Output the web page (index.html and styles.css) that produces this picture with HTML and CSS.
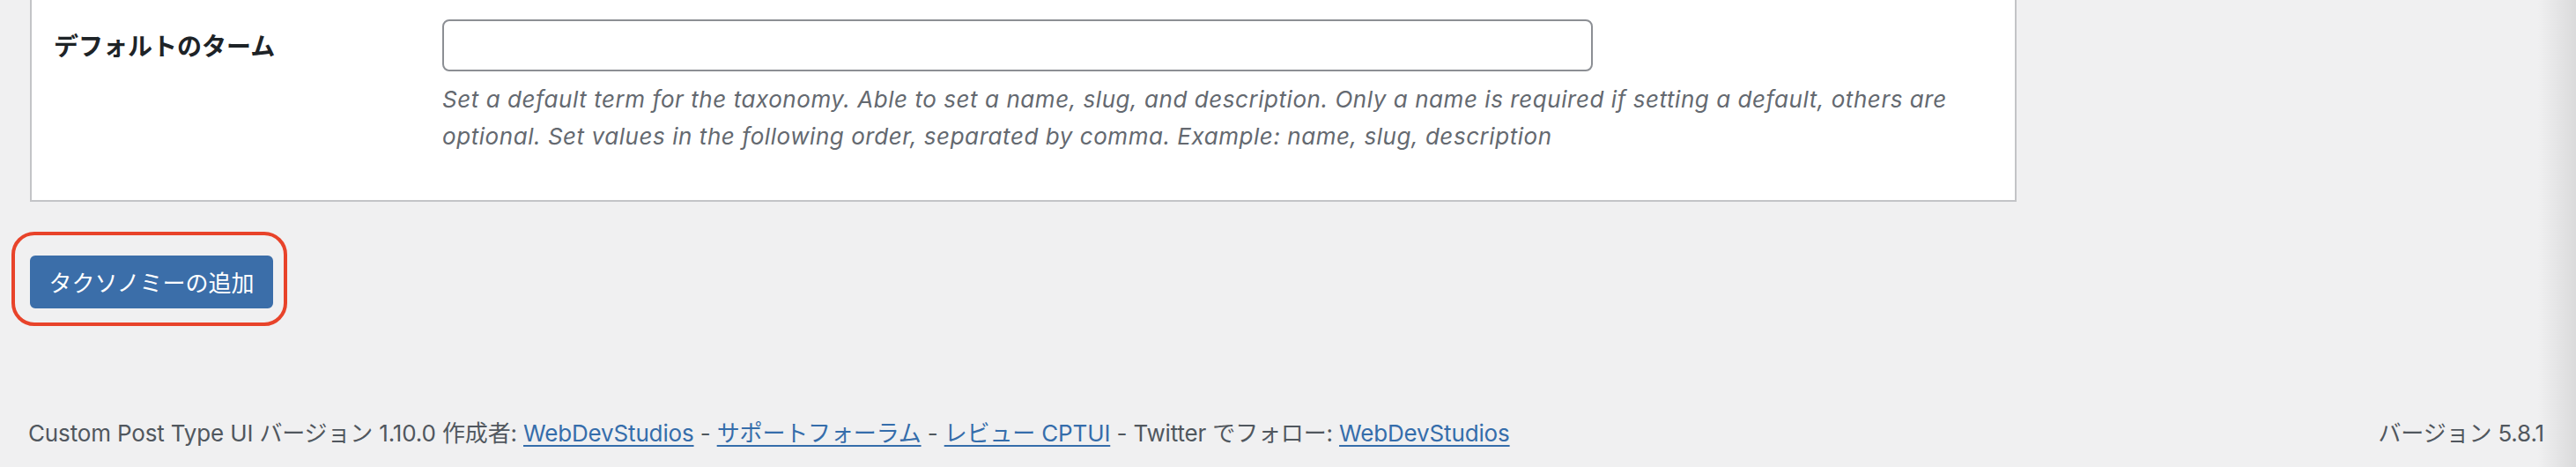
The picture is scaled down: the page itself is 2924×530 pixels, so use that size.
FILE: index.html
```html
<!DOCTYPE html>
<html lang="ja">
<head>
<meta charset="utf-8">
<title>タクソノミーの追加</title>
<link rel="stylesheet" href="styles.css">
</head>
<body>
<div class="page">
  <div class="card">
    <div class="row">
      <div class="label">デフォルトのターム</div>
      <div class="field">
        <input class="text-input" type="text" value="">
        <p class="description">Set a default term for the taxonomy. Able to set a name, slug, and description. Only a name is required if setting a default, others are<br>optional. Set values in the following order, separated by comma. Example: name, slug, description</p>
      </div>
    </div>
  </div>
  <div class="highlight">
    <button class="button-primary" type="button">タクソノミーの追加</button>
  </div>
</div>
<footer class="footer">
  <p class="footer-left">Custom Post Type UI バージョン 1.10.0 作成者: <a href="#">WebDevStudios</a> - <a href="#">サポートフォーラム</a> - <a href="#">レビュー <abbr title="Custom Post Type UI">CPTUI</abbr></a> - Twitter でフォロー: <a href="#">WebDevStudios</a></p>
  <p class="footer-right">バージョン 5.8.1</p>
</footer>
</body>
</html>
```

FILE: styles.css
```css
html, body {
  margin: 0;
  padding: 0;
}

body {
  width: 2924px;
  height: 530px;
  overflow: hidden;
  background: linear-gradient(to right, rgba(0,0,0,0) 2880px, rgba(0,0,0,0.09) 2924px), #f0f0f1;
  font-family: "Inter", "Noto Sans CJK JP", sans-serif;
  color: #50575e;
}

.page {
  padding-left: 34px;
}

.card {
  width: 2255px;
  box-sizing: border-box;
  background: #ffffff;
  border: 2px solid #c3c4c7;
  border-top: none;
  padding: 22px 0 51px 25px;
}

.row {
  display: flex;
  align-items: flex-start;
}

.label {
  width: 441px;
  flex: none;
  font-family: "Noto Sans CJK JP", sans-serif;
  font-weight: 700;
  font-size: 28px;
  line-height: 59px;
  color: #1d2327;
}

.field {
  display: flex;
  flex-direction: column;
}

.text-input {
  width: 1306px;
  height: 59px;
  box-sizing: border-box;
  margin: 0;
  border: 2px solid #8c8f94;
  border-radius: 8px;
  background: #ffffff;
  font-size: 26px;
  padding: 0 14px;
}

.description {
  margin: 11px 0 0 0;
  font-size: 26px;
  line-height: 42px;
  font-style: italic;
  letter-spacing: 0.55px;
  color: #646970;
  white-space: nowrap;
}

.highlight {
  display: inline-flex;
  margin: 34px 0 0 -21px;
  border: 4px solid #e8432a;
  border-radius: 26px;
  padding: 23px 12px 16px 17px;
}

.button-primary {
  width: 276px;
  height: 60px;
  margin: 0;
  padding: 0;
  border: 2px solid #3b6ea9;
  border-radius: 6px;
  background: #3b6ea9;
  color: #ffffff;
  font-family: "Noto Sans CJK JP", sans-serif;
  font-size: 26px;
  line-height: 56px;
  cursor: pointer;
}

.footer {
  display: flex;
  justify-content: space-between;
  align-items: center;
  margin-top: 102px;
  padding: 0 36px 0 32px;
}

.footer p {
  margin: 0;
  font-size: 26px;
  line-height: 40px;
  letter-spacing: -0.15px;
  color: #50575e;
}

.footer a {
  color: #356dab;
  text-decoration: underline;
  text-decoration-thickness: 2px;
  text-underline-offset: 4px;
}

.footer abbr {
  text-decoration: underline dotted;
  text-decoration-thickness: 2px;
}
```
